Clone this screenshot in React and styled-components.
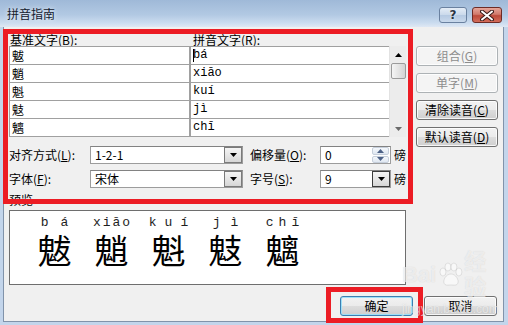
import styled, { createGlobalStyle } from "styled-components";

const GlobalStyle = createGlobalStyle`
  html, body {
    margin: 0;
    padding: 0;
    background: #fff;
  }
  body {
    font-family: "Noto Sans CJK SC", "Liberation Sans", sans-serif;
    font-size: 12px;
    color: #000;
  }
  * {
    box-sizing: border-box;
  }
`;

const rows = [
  { base: "魃", pinyin: "bá", caret: true },
  { base: "魈", pinyin: "xiāo" },
  { base: "魁", pinyin: "kuí" },
  { base: "鬾", pinyin: "jì" },
  { base: "魑", pinyin: "chī" },
];

const preview = [
  { char: "魃", letters: ["b", "á"], gap: 12 },
  { char: "魈", letters: ["x", "i", "ā", "o"], gap: 2 },
  { char: "魁", letters: ["k", "u", "í"], gap: 8 },
  { char: "鬾", letters: ["j", "ì"], gap: 10 },
  { char: "魑", letters: ["c", "h", "ī"], gap: 5 },
];

const Key = ({ k }) => (
  <>
    (<u>{k}</u>)
  </>
);

const DownArrow = ({ color = "#000" }) => (
  <svg width="7" height="4" viewBox="0 0 7 4">
    <polygon points="0,0 7,0 3.5,4" fill={color} />
  </svg>
);

const UpArrow = ({ color = "#000" }) => (
  <svg width="7" height="4" viewBox="0 0 7 4">
    <polygon points="0,4 7,4 3.5,0" fill={color} />
  </svg>
);

// faint paw print of the watermark
const Paw = () => (
  <svg width="26" height="26" viewBox="0 0 26 26">
    <g fill="rgba(255,255,255,0.55)" stroke="rgba(120,120,120,0.18)" strokeWidth="1">
      <ellipse cx="6" cy="10" rx="3" ry="4" />
      <ellipse cx="11" cy="5" rx="3" ry="4" />
      <ellipse cx="17" cy="5" rx="3" ry="4" />
      <ellipse cx="22" cy="10" rx="3" ry="4" />
      <path d="M14 12 C9 12 6 18 7 21 C8 24 11 23 14 23 C17 23 20 24 21 21 C22 18 19 12 14 12 Z" />
    </g>
  </svg>
);

const App = () => {
  return (
    <>
      <GlobalStyle />
      <Window>
        <TitleBar>
          <Title>拼音指南</Title>
          <CaptionButtons>
            <HelpButton>?</HelpButton>
            <CloseButton>
              <svg width="14" height="11" viewBox="0 0 14 11">
                <path d="M2 1.5 L12 9.5 M12 1.5 L2 9.5" stroke="#3a1a18" strokeWidth="4" strokeLinecap="round" />
                <path d="M2 1.5 L12 9.5 M12 1.5 L2 9.5" stroke="#fff" strokeWidth="2" strokeLinecap="round" />
              </svg>
            </CloseButton>
          </CaptionButtons>
        </TitleBar>

        <Client>
          <Top>
            <Main>
              <HeaderRow>
                <HeaderLabel $width={183}>
                  基准文字<Key k="B" />:
                </HeaderLabel>
                <HeaderLabel>
                  拼音文字<Key k="R" />:
                </HeaderLabel>
              </HeaderRow>

              <TableWrap>
                <Grid>
                  {rows.map((row, idx) => (
                    <Row key={`row-${idx}`}>
                      <BaseCell>{row.base}</BaseCell>
                      <PinyinCell>
                        {row.caret && <Caret />}
                        {row.pinyin}
                      </PinyinCell>
                    </Row>
                  ))}
                </Grid>
                <ScrollBar>
                  <ScrollArrow>
                    <UpArrow />
                  </ScrollArrow>
                  <Thumb />
                  <ScrollSpacer />
                  <ScrollArrow>
                    <DownArrow color="#6a6a6a" />
                  </ScrollArrow>
                </ScrollBar>
              </TableWrap>

              <ControlsRow $mt={9}>
                <Label $width={81}>
                  对齐方式<Key k="L" />:
                </Label>
                <Combo $width={153}>
                  <ComboText>1-2-1</ComboText>
                  <DropButton>
                    <DownArrow />
                  </DropButton>
                </Combo>
                <Label $width={70} $ml={7}>
                  偏移量<Key k="O" />:
                </Label>
                <Combo $width={71}>
                  <ComboText>0</ComboText>
                  <Spin>
                    <SpinHalf>
                      <UpArrow color="#4d6287" />
                    </SpinHalf>
                    <SpinHalf>
                      <DownArrow color="#4d6287" />
                    </SpinHalf>
                  </Spin>
                </Combo>
                <Unit>磅</Unit>
              </ControlsRow>

              <ControlsRow $mt={6}>
                <Label $width={81}>
                  字体<Key k="F" />:
                </Label>
                <Combo $width={153}>
                  <ComboText>宋体</ComboText>
                  <DropButton>
                    <DownArrow />
                  </DropButton>
                </Combo>
                <Label $width={70} $ml={7}>
                  字号<Key k="S" />:
                </Label>
                <Combo $width={71}>
                  <ComboText>9</ComboText>
                  <DropButton $dark>
                    <DownArrow />
                  </DropButton>
                </Combo>
                <Unit>磅</Unit>
              </ControlsRow>

              <PreviewLabel>预览</PreviewLabel>
              <PreviewBox>
                {preview.map((item, idx) => (
                  <RubyColumn key={`ruby-${idx}`}>
                    <Pinyin $gap={item.gap}>
                      {item.letters.map((l, i) => (
                        <span key={`l-${idx}-${i}`}>{l}</span>
                      ))}
                    </Pinyin>
                    <BigChar>{item.char}</BigChar>
                  </RubyColumn>
                ))}
              </PreviewBox>
            </Main>

            <Side>
              <Button disabled>
                组合<Key k="G" />
              </Button>
              <Button disabled>
                单字<Key k="M" />
              </Button>
              <Button>
                清除读音<Key k="C" />
              </Button>
              <Button>
                默认读音<Key k="D" />
              </Button>
            </Side>
          </Top>

          <Footer>
            <Button $width={73} $default>
              确定
            </Button>
            <Button $width={73}>取消</Button>
          </Footer>
        </Client>

        <Annotation $top={29} $left={3} $width={410} $height={175} />
        <Annotation $top={287} $left={326} $width={97} $height={36} />

        <Watermark>
          <WatermarkLogo>
            <span>Bai</span>
            <Paw />
            <span>经验</span>
          </WatermarkLogo>
          <WatermarkUrl>jingyan.baidu.com</WatermarkUrl>
        </Watermark>
      </Window>
    </>
  );
};

const Window = styled.div`
  position: relative;
  width: 508px;
  height: 325px;
  background: #c3d5eb;
  display: flex;
  flex-direction: column;
  overflow: hidden;
`;

const TitleBar = styled.div`
  flex: none;
  height: 27px;
  display: flex;
  align-items: flex-start;
  padding: 0 6px 0 7px;
  background: linear-gradient(to bottom, #9fb9d8 0%, #b2c9e3 55%, #cbdcef 85%, #dfe8f4 100%);
`;

const Title = styled.div`
  flex: 1;
  margin-top: 7px;
  line-height: 14px;
  font-size: 12px;
  color: #14202e;
  text-shadow: 0 0 5px rgba(255, 255, 255, 0.9);
`;

const CaptionButtons = styled.div`
  display: flex;
  gap: 5px;
  margin-top: 7px;
`;

const HelpButton = styled.div`
  width: 28px;
  height: 16px;
  border: 1px solid #6a81a0;
  border-radius: 3px;
  background: linear-gradient(to bottom, #e4ecf6 0%, #cad9eb 50%, #b5c9e2 51%, #c9d9ec 100%);
  display: flex;
  align-items: center;
  justify-content: center;
  font-family: "DejaVu Sans", sans-serif;
  font-weight: bold;
  font-size: 12px;
  color: #2a3545;
  text-shadow: 0 0 2px #fff;
`;

const CloseButton = styled.div`
  width: 30px;
  height: 16px;
  border: 1px solid #6d2c26;
  border-radius: 3px;
  background: linear-gradient(to bottom, #e6a69a 0%, #d17a6c 45%, #bd4a3a 55%, #d36d5b 100%);
  display: flex;
  align-items: center;
  justify-content: center;
`;

const Client = styled.div`
  flex: 1;
  margin: 0 4px 3px 3px;
  border: 1px solid #8193aa;
  border-top: none;
  background: #f0f0f0;
  display: flex;
  flex-direction: column;
  padding: 6px 5px 0 5px;
`;

const Top = styled.div`
  display: flex;
  gap: 10px;
`;

const Main = styled.div`
  width: 397px;
  display: flex;
  flex-direction: column;
`;

const HeaderRow = styled.div`
  display: flex;
  height: 13px;
  line-height: 13px;
`;

const HeaderLabel = styled.div`
  width: ${({ $width }) => ($width ? `${$width}px` : "auto")};
  padding-left: 1px;
  white-space: nowrap;
`;

const TableWrap = styled.div`
  display: flex;
  height: 91px;
`;

const Grid = styled.div`
  flex: 1;
  display: flex;
  flex-direction: column;
  gap: 1px;
  background: #a0a0a0;
  padding: 1px 0 1px 1px;
`;

const Row = styled.div`
  display: grid;
  grid-template-columns: 179px 1fr;
  column-gap: 2px;
  height: 17px;
`;

const BaseCell = styled.div`
  background: #fff;
  padding-left: 2px;
  line-height: 17px;
  font-size: 12px;
`;

const PinyinCell = styled.div`
  position: relative;
  background: #fff;
  padding-left: 2px;
  line-height: 17px;
  font-family: "Liberation Mono", monospace;
  font-size: 12px;
`;

const Caret = styled.span`
  position: absolute;
  left: 2px;
  top: 2px;
  width: 1px;
  height: 13px;
  background: #000;
`;

const ScrollBar = styled.div`
  width: 17px;
  background: #ececec;
  border-left: 1px solid #e2e2e2;
  display: flex;
  flex-direction: column;
  align-items: center;
`;

const ScrollArrow = styled.div`
  height: 17px;
  width: 100%;
  display: flex;
  align-items: center;
  justify-content: center;
`;

const Thumb = styled.div`
  width: 15px;
  height: 16px;
  border: 1px solid #9b9b9b;
  border-radius: 2px;
  background: linear-gradient(to right, #f5f5f5 0%, #e4e4e4 50%, #d2d2d2 100%);
`;

const ScrollSpacer = styled.div`
  flex: 1;
`;

const ControlsRow = styled.div`
  display: flex;
  align-items: center;
  height: 18px;
  margin-top: ${({ $mt }) => $mt}px;
`;

const Label = styled.div`
  width: ${({ $width }) => $width}px;
  margin-left: ${({ $ml }) => ($ml ? `${$ml}px` : "0")};
  white-space: nowrap;
  line-height: 14px;
`;

const Combo = styled.div`
  width: ${({ $width }) => $width}px;
  height: 18px;
  border: 1px solid #9c9c9c;
  border-top-color: #828282;
  background: #fff;
  display: flex;
  align-items: center;
  padding-left: 4px;
`;

const ComboText = styled.span`
  flex: 1;
  line-height: 14px;
`;

const DropButton = styled.div`
  width: 18px;
  height: 16px;
  border: 1px solid ${({ $dark }) => ($dark ? "#3c3c3c" : "#7a7a7a")};
  background: linear-gradient(to bottom, #f4f4f4 0%, #e6e6e6 50%, #d6d6d6 100%);
  display: flex;
  align-items: center;
  justify-content: center;
`;

const Spin = styled.div`
  width: 17px;
  height: 16px;
  display: flex;
  flex-direction: column;
  gap: 1px;
  margin-right: 1px;
`;

const SpinHalf = styled.div`
  flex: 1;
  border: 1px solid #c6cfdb;
  border-radius: 2px;
  background: linear-gradient(to bottom, #f5f8fc 0%, #dfe7f1 100%);
  display: flex;
  align-items: center;
  justify-content: center;
`;

const Unit = styled.div`
  margin-left: 3px;
  line-height: 14px;
`;

const PreviewLabel = styled.div`
  margin-top: 5px;
  height: 13px;
  line-height: 13px;
`;

const PreviewBox = styled.div`
  margin-top: 4px;
  height: 75px;
  border: 1px solid #6e6e6e;
  background: #fff;
  display: flex;
  padding: 4px 0 0 16px;
`;

const RubyColumn = styled.div`
  width: 57px;
  display: flex;
  flex-direction: column;
  align-items: center;
`;

const Pinyin = styled.div`
  display: flex;
  gap: ${({ $gap }) => $gap}px;
  font-family: "Liberation Mono", monospace;
  font-size: 13px;
  line-height: 15px;
  color: #1e1e1e;
`;

const BigChar = styled.div`
  margin-top: 2px;
  font-size: 34px;
  line-height: 36px;
  color: #000;
`;

const Side = styled.div`
  width: 82px;
  display: flex;
  flex-direction: column;
  gap: 7px;
  padding-top: 13px;
`;

const Button = styled.div`
  width: ${({ $width }) => ($width ? `${$width}px` : "100%")};
  height: 20px;
  border: 1px solid ${({ disabled, $default }) => (disabled ? "#adb2b5" : $default ? "#3c7fb1" : "#707070")};
  border-radius: 3px;
  background: ${({ disabled }) =>
    disabled
      ? "#f4f4f4"
      : "linear-gradient(to bottom, #f2f2f2 0%, #ebebeb 50%, #dddddd 51%, #cfcfcf 100%)"};
  box-shadow: ${({ $default }) =>
    $default ? "inset 0 0 0 1px #9ee0f8" : "inset 0 0 0 1px rgba(255, 255, 255, 0.8)"};
  color: ${({ disabled }) => (disabled ? "#8d8d8d" : "#000")};
  display: flex;
  align-items: center;
  justify-content: center;
  line-height: 14px;
  white-space: nowrap;
`;

const Footer = styled.div`
  display: flex;
  justify-content: flex-end;
  gap: 11px;
  margin-top: 11px;
  padding-right: 1px;
`;

const Annotation = styled.div`
  position: absolute;
  top: ${({ $top }) => $top}px;
  left: ${({ $left }) => $left}px;
  width: ${({ $width }) => $width}px;
  height: ${({ $height }) => $height}px;
  border: 5px solid #ec1c24;
  pointer-events: none;
`;

const Watermark = styled.div`
  position: absolute;
  left: 402px;
  top: 262px;
  display: flex;
  flex-direction: column;
  align-items: flex-start;
  pointer-events: none;
  color: rgba(255, 255, 255, 0.6);
  text-shadow: 0 0 1px rgba(110, 110, 110, 0.25);
`;

const WatermarkLogo = styled.div`
  display: flex;
  align-items: center;
  gap: 1px;
  height: 26px;
  font-family: "Liberation Sans", "Noto Sans CJK SC", sans-serif;
  font-weight: bold;
  font-size: 22px;
  line-height: 26px;
`;

const WatermarkUrl = styled.div`
  margin-top: 14px;
  font-family: "Liberation Sans", sans-serif;
  font-size: 12px;
  line-height: 14px;
`;

export default App;
